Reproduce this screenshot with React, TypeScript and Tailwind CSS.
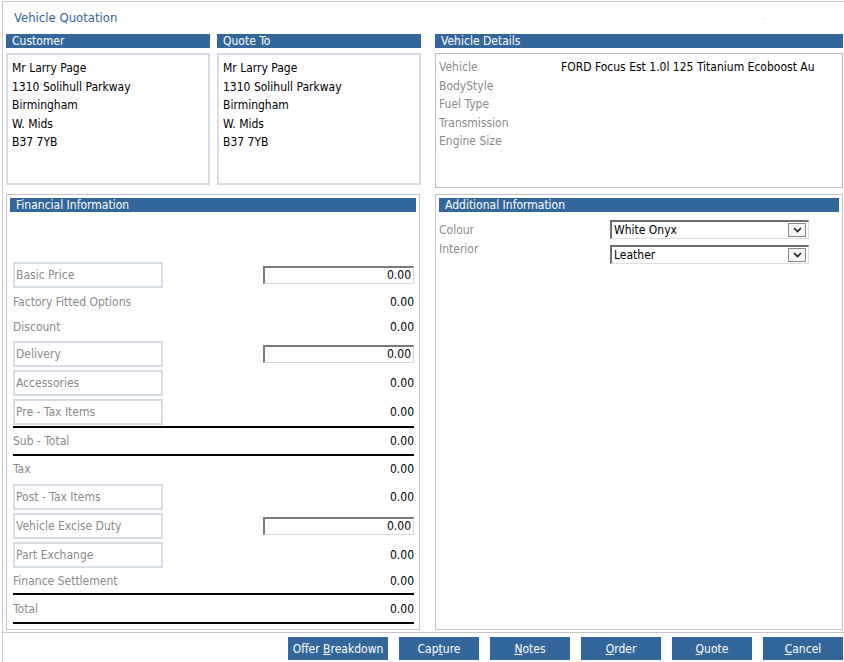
import React from 'react';

const font = { fontFamily: '"DejaVu Sans Condensed", "DejaVu Sans", sans-serif' };

const address = ['Mr Larry Page', '1310 Solihull Parkway', 'Birmingham', 'W. Mids', 'B37 7YB'];

const vehicleRows = [
  { label: 'Vehicle', value: 'FORD Focus Est 1.0l 125 Titanium Ecoboost Au' },
  { label: 'BodyStyle', value: '' },
  { label: 'Fuel Type', value: '' },
  { label: 'Transmission', value: '' },
  { label: 'Engine Size', value: '' },
];

type Row =
  | { kind: 'boxed'; label: string; input?: boolean }
  | { kind: 'plain'; label: string; h: string }
  | { kind: 'line' };

const financeRows: Row[] = [
  { kind: 'boxed', label: 'Basic Price', input: true },
  { kind: 'plain', label: 'Factory Fitted Options', h: 'h-[25px]' },
  { kind: 'plain', label: 'Discount', h: 'h-[25px]' },
  { kind: 'boxed', label: 'Delivery', input: true },
  { kind: 'boxed', label: 'Accessories' },
  { kind: 'boxed', label: 'Pre - Tax Items' },
  { kind: 'line' },
  { kind: 'plain', label: 'Sub - Total', h: 'h-[26px]' },
  { kind: 'line' },
  { kind: 'plain', label: 'Tax', h: 'h-[26px]' },
  { kind: 'boxed', label: 'Post - Tax Items' },
  { kind: 'boxed', label: 'Vehicle Excise Duty', input: true },
  { kind: 'boxed', label: 'Part Exchange' },
  { kind: 'plain', label: 'Finance Settlement', h: 'h-[24px]' },
  { kind: 'line' },
  { kind: 'plain', label: 'Total', h: 'h-[27px]' },
  { kind: 'line' },
];

const SectionBar = ({ title }: { title: string }) => (
  <div className="h-[14px] bg-[#33669a] text-white text-[12px] leading-[15px] pl-[6px] whitespace-nowrap overflow-hidden">
    {title}
  </div>
);

const Amount = ({ input }: { input?: boolean }) =>
  input ? (
    <div className="w-[151px] h-[18px] border-t-2 border-l-2 border-t-[#7a7a7a] border-l-[#7a7a7a] border-b border-r border-b-[#d8d8d8] border-r-[#d8d8d8] text-right pr-[2px] text-[12px] leading-[15px] text-black">
      0.00
    </div>
  ) : (
    <span className="text-[12px] text-black">0.00</span>
  );

const SelectBox = ({ value }: { value: string }) => (
  <div className="w-[199px] h-[19px] flex items-center border-t-2 border-l-2 border-t-[#6e6e6e] border-l-[#6e6e6e] border-b border-r border-b-[#dcdcdc] border-r-[#dcdcdc] bg-white">
    <span className="flex-1 pl-[2px] text-[12px] leading-[15px] text-black">{value}</span>
    <div className="w-[18px] h-[14px] mr-[2px] border border-[#8a8a8a] bg-[#f4f4f4] flex items-center justify-center">
      <svg width="9" height="6" viewBox="0 0 9 6">
        <path d="M1 1 L4.5 4.5 L8 1" stroke="#222" strokeWidth="1.6" fill="none" />
      </svg>
    </div>
  </div>
);

const buttons = [
  { pre: 'Offer\u00a0', key: 'B', post: 'reakdown', w: 'w-[100px]' },
  { pre: 'Cap', key: 't', post: 'ure', w: 'w-[80px]' },
  { pre: '', key: 'N', post: 'otes', w: 'w-[80px]' },
  { pre: '', key: 'O', post: 'rder', w: 'w-[80px]' },
  { pre: '', key: 'Q', post: 'uote', w: 'w-[80px]' },
  { pre: '', key: 'C', post: 'ancel', w: 'w-[80px]' },
];

export default function App() {
  return (
    <div className="w-[844px] h-[662px] bg-white overflow-hidden" style={font}>
      <div className="ml-[2px] mt-[1px] h-[661px] border-l border-t border-[#c8c8c8] relative">
        {/* Title */}
        <div className="h-[32px] pl-[11px] flex items-center text-[13px] text-[#33669a]">Vehicle Quotation</div>
        <div className="absolute left-[761px] top-[16px] w-[1px] h-[1px] bg-[#cfcfcf]" />

        {/* Top panels */}
        <div className="flex pl-[3px]">
          {['Customer', 'Quote To'].map((t, i) => (
            <div key={t} className={`w-[204px] ${i === 0 ? 'mr-[7px]' : 'mr-[14px]'}`}>
              <SectionBar title={t} />
              <div className="mt-[5px] h-[132px] border-2 border-[#d5dce7] pl-[4px] pt-[4px] text-[12px] leading-[18.5px] text-black">
                {address.map(l => (
                  <div key={l}>{l}</div>
                ))}
              </div>
            </div>
          ))}
          <div className="w-[408px]">
            <SectionBar title="Vehicle Details" />
            <div className="mt-[5px] h-[135px] border border-[#bcbcbc] pl-[3px] pt-[4px] pr-[4px] text-[12px] leading-[18.5px]">
              {vehicleRows.map(r => (
                <div key={r.label} className="flex">
                  <span className="w-[122px] shrink-0 text-[#8a8a8a]">{r.label}</span>
                  <span className="text-black whitespace-nowrap">{r.value}</span>
                </div>
              ))}
            </div>
          </div>
        </div>

        {/* Bottom panels */}
        <div className="flex pl-[3px] mt-[6px]">
          <div className="w-[414px] h-[436px] border border-[#c4c4c4] p-[3px] mr-[15px]">
            <SectionBar title="Financial Information" />
            <div className="pl-[3px] pr-[2px] pt-[48px] text-[12px]">
              {financeRows.map((r, i) => {
                if (r.kind === 'line') return <div key={i} className="h-[2px] bg-black" />;
                if (r.kind === 'plain')
                  return (
                    <div key={i} className={`${r.h} flex items-center justify-between`}>
                      <span className="text-[#8a8a8a]">{r.label}</span>
                      <Amount />
                    </div>
                  );
                return (
                  <div key={i} className="h-[29px] flex items-center justify-between">
                    <div className="w-[150px] h-[26px] border-2 border-[#d5dce7] pl-[1px] flex items-center text-[#8a8a8a]">
                      {r.label}
                    </div>
                    <Amount input={r.input} />
                  </div>
                );
              })}
            </div>
          </div>

          <div className="w-[408px] h-[436px] border border-[#c4c4c4] p-[3px]">
            <SectionBar title="Additional Information" />
            <div className="pt-[8px] text-[12px]">
              <div className="h-[19px] flex items-center">
                <span className="w-[171px] text-[#8a8a8a]">Colour</span>
                <SelectBox value="White Onyx" />
              </div>
              <div className="flex items-start mt-[2px]">
                <span className="w-[171px] text-[#8a8a8a] leading-[16px]">Interior</span>
                <div className="mt-[4px]">
                  <SelectBox value="Leather" />
                </div>
              </div>
            </div>
          </div>
        </div>

        {/* Footer */}
        <div className="mt-[2px] border-t border-[#c8c8c8] pt-[4px] flex justify-end gap-[11px] pr-[1px]">
          {buttons.map(b => (
            <div key={b.key + b.post} className={`${b.w} h-[23px] bg-[#33669a] text-white text-[12px] flex items-center justify-center whitespace-nowrap`}>
              <span>
                {b.pre}
                <span className="underline">{b.key}</span>
                {b.post}
              </span>
            </div>
          ))}
        </div>
      </div>
    </div>
  );
}
